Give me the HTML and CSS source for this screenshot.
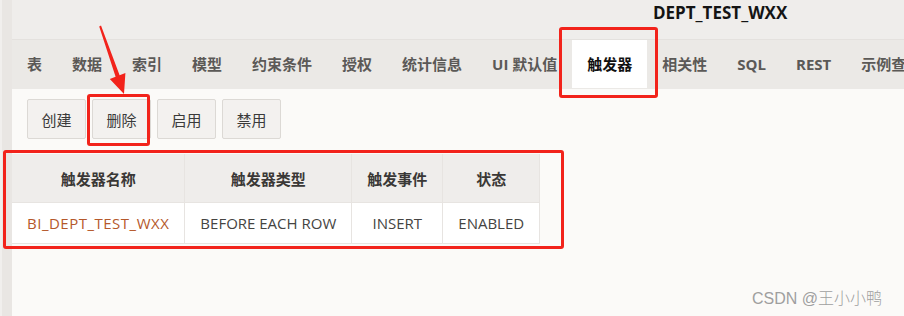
FILE: index.html
```html
<!DOCTYPE html>
<html lang="zh">
<head>
<meta charset="utf-8">
<title>DEPT_TEST_WXX</title>
<link rel="stylesheet" href="styles.css">
</head>
<body>
<div class="app">
  <div class="rail"></div>
  <div class="main">
    <header class="titlebar"><h1 class="title">DEPT_TEST_WXX</h1></header>
    <nav class="tabs">
      <span class="tab">表</span>
      <span class="tab">数据</span>
      <span class="tab">索引</span>
      <span class="tab">模型</span>
      <span class="tab">约束条件</span>
      <span class="tab">授权</span>
      <span class="tab">统计信息</span>
      <span class="tab">UI 默认值</span>
      <span class="tab active">触发器</span>
      <span class="tab">相关性</span>
      <span class="tab">SQL</span>
      <span class="tab">REST</span>
      <span class="tab">示例查询</span>
    </nav>
    <section class="content">
      <div class="toolbar">
        <button class="btn">创建</button>
        <button class="btn">删除</button>
        <button class="btn">启用</button>
        <button class="btn">禁用</button>
      </div>
      <table class="grid">
        <thead>
          <tr><th>触发器名称</th><th>触发器类型</th><th>触发事件</th><th>状态</th></tr>
        </thead>
        <tbody>
          <tr><td><a class="link">BI_DEPT_TEST_WXX</a></td><td>BEFORE EACH ROW</td><td>INSERT</td><td>ENABLED</td></tr>
        </tbody>
      </table>
    </section>
  </div>
</div>

<div class="mark mark-tab"></div>
<div class="mark mark-btn"></div>
<div class="mark mark-table"></div>
<svg class="arrow" width="904" height="316" viewBox="0 0 904 316">
  <polygon points="99.2,26.4 101,25.6 119.6,75.2 125.4,73 124,94 109.8,78.9 115.6,76.8" fill="#f2231b"/>
</svg>
<div class="watermark">CSDN @王小小鸭</div>
</body>
</html>
```

FILE: styles.css
```css
html, body {
  margin: 0;
  padding: 0;
}
body {
  width: 904px;
  height: 316px;
  overflow: hidden;
  position: relative;
  background: #ebe8e5;
  font-family: "Open Sans", "Noto Sans CJK SC", sans-serif;
  color: #3c3a38;
}
.app {
  display: flex;
  height: 316px;
}
.rail {
  width: 10px;
  flex: none;
  border-left: 2px solid #f1efed;
  background: #e9e6e3;
}
.main {
  flex: 1;
  min-width: 0;
  display: flex;
  flex-direction: column;
}
.titlebar {
  height: 40px;
  box-sizing: border-box;
  background: #efedeb;
  border-bottom: 1px solid #e4e1de;
  padding: 2px 0 0 641px;
}
.title {
  margin: 0;
  font-size: 17px;
  line-height: 22px;
  font-weight: 700;
  color: #141414;
}
.tabs {
  height: 49px;
  display: flex;
  align-items: flex-start;
  white-space: nowrap;
  overflow: hidden;
  background: #ebe9e6;
}
.tab {
  flex: none;
  height: 48px;
  line-height: 48px;
  padding: 0 15px;
  font-size: 15px;
  font-weight: 700;
  color: #5b5957;
}
.tab.active {
  background: #ffffff;
  color: #111111;
}
.content {
  flex: 1;
  background: #fbfaf8;
  padding-top: 10px;
}
.toolbar {
  display: flex;
  gap: 6px;
  padding-left: 15px;
  margin-bottom: 15px;
}
.btn {
  width: 59px;
  height: 40px;
  padding: 0;
  background: #f3f1ef;
  border: 1px solid #dcd9d5;
  border-radius: 2px;
  font-family: "Open Sans", "Noto Sans CJK SC", sans-serif;
  font-size: 15px;
  color: #3a3a3a;
}
.grid {
  border-collapse: collapse;
  font-size: 15px;
}
.grid th {
  height: 48px;
  padding: 0 15px;
  background: #efedeb;
  border: 1px solid #e7e4e1;
  border-top: none;
  border-left: none;
  font-weight: 700;
  color: #3a3836;
  text-align: center;
}
.grid td {
  height: 40px;
  padding: 0 15px;
  background: #ffffff;
  border: 1px solid #e7e4e1;
  border-left: none;
  text-align: center;
  color: #454442;
}
.link {
  color: #b5582b;
  letter-spacing: 0.5px;
}
.mark {
  position: absolute;
  box-sizing: border-box;
  border: 3px solid #f2231b;
  border-radius: 3px;
}
.mark-tab {
  left: 559px;
  top: 27px;
  width: 99px;
  height: 71px;
}
.mark-btn {
  left: 87px;
  top: 94px;
  width: 63px;
  height: 52px;
}
.mark-table {
  left: 3px;
  top: 150px;
  width: 561px;
  height: 99px;
}
.arrow {
  position: absolute;
  left: 0;
  top: 0;
  pointer-events: none;
}
.watermark {
  position: absolute;
  left: 752px;
  top: 285px;
  font-family: "Liberation Sans", "Noto Sans CJK SC", sans-serif;
  font-size: 16px;
  font-weight: 300;
  color: #9f9f9f;
  white-space: nowrap;
}
```
